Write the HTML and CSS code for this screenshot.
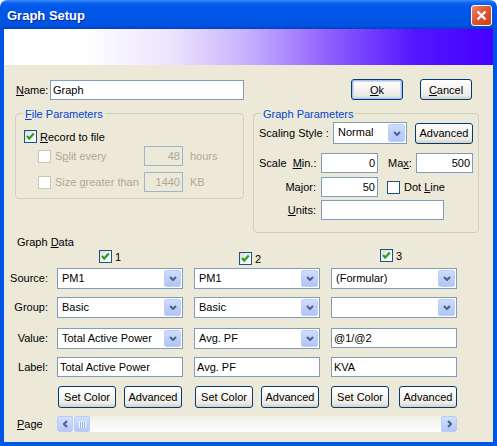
FILE: index.html
```html
<!DOCTYPE html>
<html>
<head>
    <title>Graph Setup</title>
    <link rel="stylesheet" href="styles.css">
</head>
<body>
<div class="window">
    <div class="titlebar">
        <span class="title">Graph Setup</span>
        <span class="close">
            <svg width="11" height="11" viewBox="0 0 11 11"><path d="M1.5 1.5L9.5 9.5M9.5 1.5L1.5 9.5" stroke="#fff" stroke-width="2.4"/></svg>
        </span>
    </div>
    <div class="frame">
        <div class="banner"></div>
        <div class="content">
            <div class="name-row">
                <span class="name-label"><u>N</u>ame:</span>
                <div class="field name-field">Graph</div>
                <button class="btn btn-default ok"><u>O</u>k</button>
                <button class="btn cancel"><u>C</u>ancel</button>
            </div>

            <div class="groups">
                <div class="group file-group">
                    <span class="group-title"><u>F</u>ile Parameters</span>
                    <div class="check-row">
                        <span class="check"><svg width="11" height="11" viewBox="0 0 11 11"><path d="M2 5l2.2 2.5L8.8 2.6" fill="none" stroke="#21a121" stroke-width="2.2"/></svg></span>
                        <span><u>R</u>ecord to file</span>
                    </div>
                    <div class="sub-row">
                        <span class="check disabled"></span>
                        <span class="sub-label">S<u>p</u>lit every</span>
                        <div class="field num small disabled">48</div>
                        <span class="unit">hours</span>
                    </div>
                    <div class="sub-row">
                        <span class="check disabled"></span>
                        <span class="sub-label">Size <u>g</u>reater than</span>
                        <div class="field num small disabled">1440</div>
                        <span class="unit">KB</span>
                    </div>
                </div>

                <div class="group graph-group">
                    <span class="group-title">Graph Parameters</span>
                    <div class="gp-row row-a">
                        <span class="style-label">Scaling Style :</span>
                        <div class="combo style-combo">
                            <span class="combo-text">Normal</span>
                            <span class="drop"><svg width="8" height="5" viewBox="0 0 8 5"><path d="M1 1l3 3 3-3" fill="none" stroke="#4d6185" stroke-width="2"/></svg></span>
                        </div>
                        <button class="btn adv-top">Advanced</button>
                    </div>
                    <div class="gp-row row-b">
                        <span class="gp-label scale-label">Scale&nbsp; <u>M</u>in.:</span>
                        <div class="field num short">0</div>
                        <span class="max-label">Ma<u>x</u>:</span>
                        <div class="field num short">500</div>
                    </div>
                    <div class="gp-row row-c">
                        <span class="gp-label">Major:</span>
                        <div class="field num short">50</div>
                        <span class="check dot-check"></span>
                        <span class="dot-label">Dot <u>L</u>ine</span>
                    </div>
                    <div class="gp-row row-d">
                        <span class="gp-label"><u>U</u>nits:</span>
                        <div class="field units"></div>
                    </div>
                </div>
            </div>

            <div class="data-title">Graph <u>D</u>ata</div>
            <div class="data-grid">
                <div></div>
                <div class="col-head head-1">
                    <span class="check"><svg width="11" height="11" viewBox="0 0 11 11"><path d="M2 5l2.2 2.5L8.8 2.6" fill="none" stroke="#21a121" stroke-width="2.2"/></svg></span>
                    <span>1</span>
                </div>
                <div class="col-head head-2">
                    <span class="check"><svg width="11" height="11" viewBox="0 0 11 11"><path d="M2 5l2.2 2.5L8.8 2.6" fill="none" stroke="#21a121" stroke-width="2.2"/></svg></span>
                    <span>2</span>
                </div>
                <div class="col-head head-3">
                    <span class="check"><svg width="11" height="11" viewBox="0 0 11 11"><path d="M2 5l2.2 2.5L8.8 2.6" fill="none" stroke="#21a121" stroke-width="2.2"/></svg></span>
                    <span>3</span>
                </div>

                <div class="row-label">Source:</div>
                <div class="combo"><span class="combo-text">PM1</span><span class="drop"><svg width="8" height="5" viewBox="0 0 8 5"><path d="M1 1l3 3 3-3" fill="none" stroke="#4d6185" stroke-width="2"/></svg></span></div>
                <div class="combo"><span class="combo-text">PM1</span><span class="drop"><svg width="8" height="5" viewBox="0 0 8 5"><path d="M1 1l3 3 3-3" fill="none" stroke="#4d6185" stroke-width="2"/></svg></span></div>
                <div class="combo"><span class="combo-text">(Formular)</span><span class="drop"><svg width="8" height="5" viewBox="0 0 8 5"><path d="M1 1l3 3 3-3" fill="none" stroke="#4d6185" stroke-width="2"/></svg></span></div>

                <div class="row-label">Group:</div>
                <div class="combo"><span class="combo-text">Basic</span><span class="drop"><svg width="8" height="5" viewBox="0 0 8 5"><path d="M1 1l3 3 3-3" fill="none" stroke="#4d6185" stroke-width="2"/></svg></span></div>
                <div class="combo"><span class="combo-text">Basic</span><span class="drop"><svg width="8" height="5" viewBox="0 0 8 5"><path d="M1 1l3 3 3-3" fill="none" stroke="#4d6185" stroke-width="2"/></svg></span></div>
                <div class="combo"><span class="combo-text"></span><span class="drop"><svg width="8" height="5" viewBox="0 0 8 5"><path d="M1 1l3 3 3-3" fill="none" stroke="#4d6185" stroke-width="2"/></svg></span></div>

                <div class="row-label">Value:</div>
                <div class="combo"><span class="combo-text">Total Active Power</span><span class="drop"><svg width="8" height="5" viewBox="0 0 8 5"><path d="M1 1l3 3 3-3" fill="none" stroke="#4d6185" stroke-width="2"/></svg></span></div>
                <div class="combo"><span class="combo-text">Avg. PF</span><span class="drop"><svg width="8" height="5" viewBox="0 0 8 5"><path d="M1 1l3 3 3-3" fill="none" stroke="#4d6185" stroke-width="2"/></svg></span></div>
                <div class="field cell-field">@1/@2</div>

                <div class="row-label">Label:</div>
                <div class="field cell-field">Total Active Power</div>
                <div class="field cell-field">Avg. PF</div>
                <div class="field cell-field">KVA</div>

                <div></div>
                <div class="btn-pair">
                    <button class="btn set-btn">Set Color</button>
                    <button class="btn set-btn">Advanced</button>
                </div>
                <div class="btn-pair">
                    <button class="btn set-btn">Set Color</button>
                    <button class="btn set-btn">Advanced</button>
                </div>
                <div class="btn-pair wide">
                    <button class="btn set-btn">Set Color</button>
                    <button class="btn set-btn">Advanced</button>
                </div>

                <div class="row-label page-label"><u>P</u>age</div>
                <div class="scrollbar">
                    <span class="sb-btn"><svg width="5" height="8" viewBox="0 0 5 8"><path d="M4 1L1 4l3 3" fill="none" stroke="#4d6185" stroke-width="2"/></svg></span>
                    <span class="sb-btn sb-thumb"><svg width="7" height="7" viewBox="0 0 7 7"><path d="M0.5 0v7M2.5 0v7M4.5 0v7M6.5 0v7" stroke="#f4f8ff" stroke-width="1"/><path d="M1.5 1v7M3.5 1v7M5.5 1v7" stroke="#8eaef2" stroke-width="1"/></svg></span>
                    <span class="sb-track"></span>
                    <span class="sb-btn"><svg width="5" height="8" viewBox="0 0 5 8"><path d="M1 1l3 3-3 3" fill="none" stroke="#4d6185" stroke-width="2"/></svg></span>
                </div>
            </div>
        </div>
    </div>
</div>
</body>
</html>
```

FILE: styles.css
```css
body {
    margin: 0;
    background: #ffffff;
    font-family: "Liberation Sans", Arial, sans-serif;
    font-size: 11px;
    color: #000000;
}

u {
    text-underline-offset: 1px;
}

.window {
    width: 497px;
    height: 446px;
    display: flex;
    flex-direction: column;
}

/* title bar */
.titlebar {
    height: 29px;
    flex: none;
    box-sizing: border-box;
    display: flex;
    align-items: center;
    justify-content: space-between;
    padding: 2px 5px 0 7px;
    border-radius: 7px 7px 0 0;
    background: linear-gradient(to bottom, #3b8cf9 0px, #0c63ef 3px, #0058e8 7px, #0055e5 20px, #0052df 26px, #0040c6 29px);
}

.title {
    color: #ffffff;
    font-weight: bold;
    font-size: 13px;
    text-shadow: 1px 1px 0 #0a2a9a;
}

.close {
    width: 21px;
    height: 21px;
    box-sizing: border-box;
    border: 1px solid #ffffff;
    border-radius: 3px;
    background: linear-gradient(135deg, #f08a66 0%, #e0562f 45%, #cc3f17 100%);
    display: flex;
    align-items: center;
    justify-content: center;
}

.frame {
    flex: 1;
    display: flex;
    flex-direction: column;
    border: 4px solid #0055e5;
    border-top: 0;
    background: #ece9d8;
}

.banner {
    height: 36px;
    flex: none;
    background: linear-gradient(to right, #ffffff 0%, #ffffff 16%, #ece5fd 34%, #c6b0fc 50%, #8d5dfd 67%, #5416ff 84%, #4500ff 100%);
}

.content {
    flex: 1;
}

/* common controls */
.field {
    box-sizing: border-box;
    height: 20px;
    line-height: 18px;
    padding: 0 2px;
    border: 1px solid #7f9db9;
    background: #ffffff;
    white-space: nowrap;
    overflow: hidden;
}

.field.num {
    text-align: right;
}

.field.disabled {
    background: #ece9d8;
    color: #aca899;
    border-color: #9fb3c9;
}

.btn {
    box-sizing: border-box;
    padding: 0;
    font: inherit;
    color: #000000;
    border: 1px solid #003c74;
    border-radius: 3px;
    background: linear-gradient(to bottom, #ffffff 0%, #f7f6f2 40%, #ecebe5 80%, #d6d0c5 100%);
}

.btn-default {
    box-shadow: inset 0 0 0 1px #a9c0ef, inset 0 0 0 2px #cfdcf6;
}

.check {
    width: 13px;
    height: 13px;
    box-sizing: border-box;
    flex: none;
    border: 1px solid #1c5180;
    background: linear-gradient(135deg, #dcdcd6 0%, #f4f4f0 50%, #ffffff 100%);
    display: flex;
}

.check.disabled {
    border-color: #cac8bb;
    background: #ffffff;
}

.combo {
    box-sizing: border-box;
    height: 21px;
    display: flex;
    padding: 1px;
    border: 1px solid #7f9db9;
    background: #ffffff;
}

.combo-text {
    flex: 1;
    padding-left: 3px;
    line-height: 17px;
    white-space: nowrap;
    overflow: hidden;
}

.drop {
    width: 17px;
    box-sizing: border-box;
    border: 1px solid #bccff8;
    border-radius: 2px;
    background: linear-gradient(to bottom, #cfdcfd 0%, #bccdf8 60%, #b1c5f6 100%);
    display: flex;
    align-items: center;
    justify-content: center;
}

/* name row */
.name-row {
    display: flex;
    align-items: center;
    height: 21px;
    margin-top: 14px;
    padding: 0 21px 0 12px;
}

.name-label {
    width: 34px;
}

.name-field {
    width: 194px;
}

.ok {
    margin-left: auto;
    width: 52px;
    height: 21px;
}

.cancel {
    margin-left: 17px;
    width: 52px;
    height: 21px;
}

/* group boxes */
.groups {
    display: flex;
    align-items: flex-start;
    gap: 9px;
    margin-top: 13px;
    padding-left: 11px;
}

.group {
    position: relative;
    box-sizing: border-box;
    border: 1px solid #d0d0bf;
    border-radius: 4px;
}

.group-title {
    position: absolute;
    top: -7px;
    left: 7px;
    padding: 0 2px;
    line-height: 14px;
    color: #0046d5;
    background: #ece9d8;
}

.file-group {
    width: 229px;
    height: 86px;
    padding: 16px 0 0 8px;
}

.check-row {
    display: flex;
    align-items: center;
    gap: 3px;
    height: 13px;
}

.sub-row {
    display: flex;
    align-items: center;
    height: 20px;
    margin-top: 3px;
    padding-left: 14px;
    color: #aca899;
}

.sub-row + .sub-row {
    margin-top: 6px;
}

.sub-label {
    width: 89px;
    margin-left: 4px;
}

.field.small {
    width: 39px;
}

.unit {
    margin-left: 7px;
}

.graph-group {
    width: 226px;
    height: 120px;
    padding: 8px 0 0 5px;
}

.gp-row {
    display: flex;
    align-items: center;
}

.style-label {
    width: 74px;
}

.style-combo {
    width: 74px;
    height: 22px;
}

.adv-top {
    width: 58px;
    height: 21px;
    margin-left: 8px;
}

.row-b {
    margin-top: 9px;
}

.row-c {
    margin-top: 4px;
}

.row-d {
    margin-top: 3px;
}

.gp-label {
    width: 57px;
    flex: none;
    padding-right: 5px;
    text-align: right;
    white-space: nowrap;
}

.gp-label.scale-label {
    width: 62px;
    padding-right: 0;
    text-align: left;
}

.field.short {
    width: 57px;
}

.max-label {
    width: 28px;
    padding-left: 10px;
}

.dot-check {
    margin-left: 9px;
    background: #ffffff;
}

.dot-label {
    margin-left: 4px;
}

.field.units {
    width: 123px;
}

/* graph data */
.data-title {
    margin-top: 3px;
    padding-left: 13px;
    line-height: 13px;
}

.data-grid {
    display: grid;
    grid-template-columns: 42px 126px 126px 126px;
    grid-template-rows: 19px 29px 31px 29px 29px 30px 16px;
    column-gap: 11px;
    align-items: start;
}

.col-head {
    display: flex;
    align-items: center;
    gap: 3px;
    padding-top: 1px;
}

.head-1 {
    padding-left: 42px;
}

.head-2 {
    padding-left: 45px;
    padding-top: 3px;
}

.head-3 {
    padding-left: 49px;
    padding-top: 0;
}

.row-label {
    justify-self: end;
    margin-right: -2px;
    line-height: 21px;
}

.page-label {
    justify-self: start;
    margin-right: 0;
    padding-left: 13px;
    line-height: 16px;
}

.cell-field {
    height: 20px;
}

.btn-pair {
    display: flex;
    gap: 8px;
    padding-left: 1px;
}

.btn-pair.wide {
    justify-content: space-between;
    gap: 0;
    padding-left: 0;
}

.set-btn {
    width: 58px;
    height: 22px;
}

.scrollbar {
    grid-column: 2 / 5;
    height: 16px;
    display: flex;
    background: linear-gradient(to bottom, #f1efe8 0%, #f7f6f2 40%, #fefefe 100%);
}

.sb-btn {
    width: 16px;
    height: 16px;
    box-sizing: border-box;
    flex: none;
    border: 1px solid #b7ccf7;
    border-radius: 2px;
    background: linear-gradient(to bottom, #d3e0fd 0%, #c2d3fb 50%, #b4c8f7 100%);
    display: flex;
    align-items: center;
    justify-content: center;
}

.sb-thumb {
    margin-left: 1px;
}

.sb-track {
    flex: 1;
}
```
